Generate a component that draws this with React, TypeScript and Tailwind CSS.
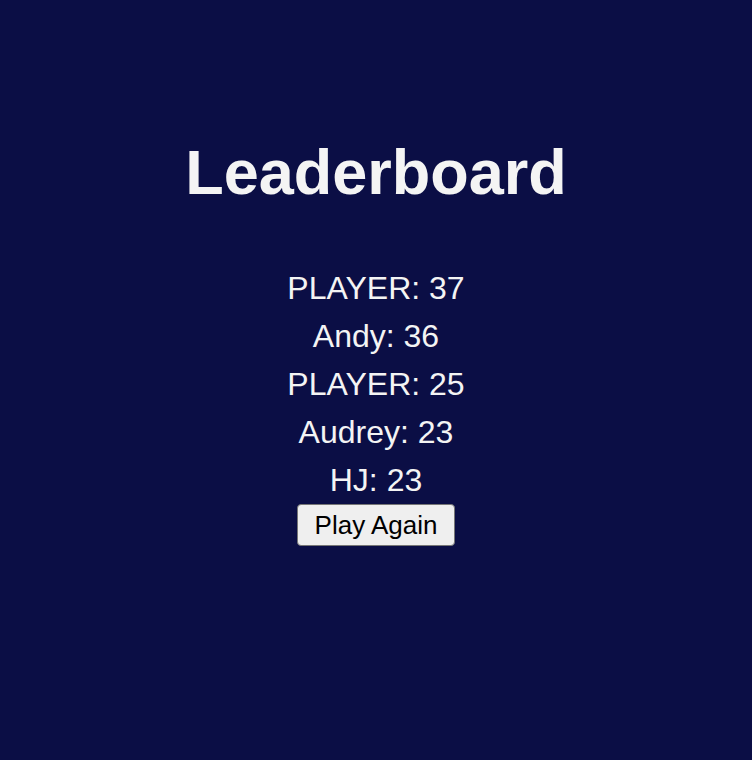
import React from 'react';

const SCORES = [
  { name: 'PLAYER', score: 37 },
  { name: 'Andy', score: 36 },
  { name: 'PLAYER', score: 25 },
  { name: 'Audrey', score: 23 },
  { name: 'HJ', score: 23 },
];

const App: React.FC = () => {
  return (
    <div className="min-h-[760px] w-full bg-[#0b0e45] font-['Liberation_Sans',Arial,sans-serif] text-[#f4f4f4]">
      <div className="flex flex-col items-center pt-[140px]">
        <h1 className="text-[63px] font-bold leading-[64px]">Leaderboard</h1>
        <ul className="mt-[60px] flex flex-col items-center">
          {SCORES.map((s, i) => (
            <li key={i} className="text-[32px] leading-[48px]">
              {s.name}: {s.score}
            </li>
          ))}
        </ul>
        <button className="flex h-[42px] w-[158px] items-center justify-center rounded-[4px] border border-[#767676] bg-[#efefef] text-[26px] text-black">
          Play Again
        </button>
      </div>
    </div>
  );
};

export default App;
